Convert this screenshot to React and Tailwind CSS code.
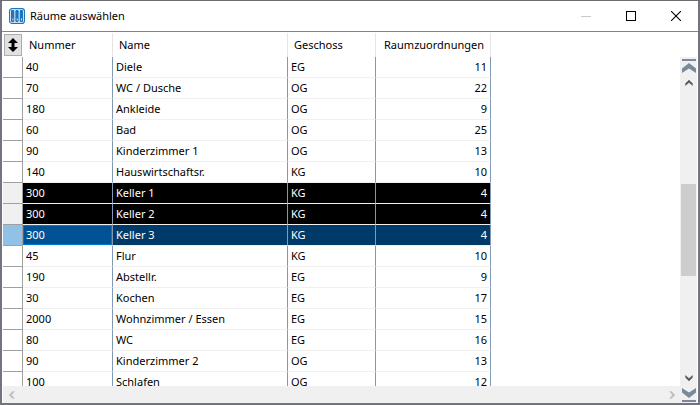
import { useState } from 'react';
import clsx from 'clsx';

const rooms = [
  { nummer: 40, name: 'Diele', geschoss: 'EG', anzahl: 11 },
  { nummer: 70, name: 'WC / Dusche', geschoss: 'OG', anzahl: 22 },
  { nummer: 180, name: 'Ankleide', geschoss: 'OG', anzahl: 9 },
  { nummer: 60, name: 'Bad', geschoss: 'OG', anzahl: 25 },
  { nummer: 90, name: 'Kinderzimmer 1', geschoss: 'OG', anzahl: 13 },
  { nummer: 140, name: 'Hauswirtschaftsr.', geschoss: 'KG', anzahl: 10 },
  { nummer: 300, name: 'Keller 1', geschoss: 'KG', anzahl: 4 },
  { nummer: 300, name: 'Keller 2', geschoss: 'KG', anzahl: 4 },
  { nummer: 300, name: 'Keller 3', geschoss: 'KG', anzahl: 4 },
  { nummer: 45, name: 'Flur', geschoss: 'KG', anzahl: 10 },
  { nummer: 190, name: 'Abstellr.', geschoss: 'EG', anzahl: 9 },
  { nummer: 30, name: 'Kochen', geschoss: 'EG', anzahl: 17 },
  { nummer: 2000, name: 'Wohnzimmer / Essen', geschoss: 'EG', anzahl: 15 },
  { nummer: 80, name: 'WC', geschoss: 'EG', anzahl: 16 },
  { nummer: 90, name: 'Kinderzimmer 2', geschoss: 'OG', anzahl: 13 },
  { nummer: 100, name: 'Schlafen', geschoss: 'OG', anzahl: 12 },
];

function AppIcon() {
  return (
    <svg width="16" height="16" viewBox="0 0 16 16" aria-hidden="true">
      <rect x="0.6" y="0.6" width="14.8" height="14.8" rx="2.5" fill="#fff" stroke="#1c74bc" strokeWidth="1.2" />
      {[2, 6.3, 10.6].map(x => (
        <g key={x}>
          <rect x={x} y="2" width="3.4" height="12" rx="1" fill="#1c74bc" />
          <path d={`M${x + 1.9} 10.5v2`} stroke="#fff" strokeWidth="0.8" />
        </g>
      ))}
    </svg>
  );
}

function SortIcon() {
  return (
    <svg width="10" height="14" viewBox="0 0 10 14" aria-hidden="true">
      <path d="M5 0L10 5H6.5V9H10L5 14L0 9H3.5V5H0Z" fill="#000" />
    </svg>
  );
}

function Chevron({ className }) {
  return (
    <svg width="8" height="6" viewBox="0 0 8 6" className={className} aria-hidden="true">
      <path d="M0.5 5.5V3.5L4 0L7.5 3.5V5.5L4 2.5Z" fill="currentColor" stroke="currentColor" strokeWidth="0.4" />
    </svg>
  );
}

function EndArrow({ className }) {
  return (
    <svg width="14" height="14" viewBox="0 0 14 14" className={className} aria-hidden="true">
      <path d="M0 0H14V2H0Z" fill="#7b8a9b" />
      <path d="M0 9.5L7 4L14 9.5V14L7 9.5L0 14Z" fill="#7b8a9b" />
    </svg>
  );
}

function TitleBar() {
  return (
    <header className="flex h-[31px] shrink-0 items-center justify-between border-b border-[#838395] bg-white pl-[7px]">
      <h1 className="flex items-center gap-[5px]">
        <AppIcon />
        Räume auswählen
      </h1>
      <div className="flex self-stretch">
        <button type="button" aria-label="Minimieren" disabled className="flex w-[45px] items-center justify-center">
          <svg width="10" height="10" viewBox="0 0 10 10" aria-hidden="true">
            <path d="M0 5.5H10" stroke="#c8c8c8" />
          </svg>
        </button>
        <button type="button" aria-label="Maximieren" className="flex w-[45px] items-center justify-center">
          <svg width="10" height="10" viewBox="0 0 10 10" aria-hidden="true">
            <rect x="0.5" y="0.5" width="9" height="9" fill="none" stroke="#000" />
          </svg>
        </button>
        <button type="button" aria-label="Schließen" className="flex w-[45px] items-center justify-center">
          <svg width="10" height="10" viewBox="0 0 10 10" aria-hidden="true">
            <path d="M0 0L10 10M10 0L0 10" stroke="#000" strokeWidth="1.1" />
          </svg>
        </button>
      </div>
    </header>
  );
}

function RoomTable() {
  const [selected, setSelected] = useState([6, 7, 8]);
  const [current, setCurrent] = useState(8);

  function toggleRow(index) {
    setSelected(selected.includes(index) ? selected.filter(i => i !== index) : [...selected, index]);
    setCurrent(index);
  }

  return (
    <table className="w-[488px] table-fixed border-separate border-spacing-0">
      <colgroup>
        <col className="w-5" />
        <col className="w-[90px]" />
        <col className="w-[175px]" />
        <col className="w-[88px]" />
        <col className="w-[115px]" />
      </colgroup>
      <thead>
        <tr className="h-6 text-left">
          <th className="p-0 pl-px">
            <button
              type="button"
              aria-label="Sortieren"
              className="flex h-[22px] w-[18px] items-center justify-center border border-[#adadad] bg-[#e1e1e1]"
            >
              <SortIcon />
            </button>
          </th>
          <th className="border-r border-[#e5e5e5] p-0 pl-1.5 font-normal">Nummer</th>
          <th className="border-r border-[#e5e5e5] p-0 pl-1.5 font-normal">Name</th>
          <th className="border-r border-[#e5e5e5] p-0 pl-1.5 font-normal">Geschoss</th>
          <th className="border-r border-[#e5e5e5] p-0 pr-1.5 text-right font-normal">Raumzuordnungen</th>
        </tr>
      </thead>
      <tbody>
        {rooms.map((room, index) => {
          const isSelected = selected.includes(index);
          const isCurrent = current === index;
          const cell = 'border-r border-b border-r-[#8099b5] border-b-[#f0f0f0] p-0';
          return (
            <tr
              key={index}
              className={clsx(
                'h-[21px]',
                isSelected && 'text-white',
                isSelected && (isCurrent ? 'bg-[#003a69]' : 'bg-black'),
              )}
            >
              <td className="border-r border-b border-[#a0a0a0] p-0">
                <button
                  type="button"
                  aria-label={`${room.name} auswählen`}
                  aria-pressed={isSelected}
                  onClick={() => toggleRow(index)}
                  className={clsx(
                    'block h-5 w-full',
                    !isSelected && 'bg-white',
                    isSelected && (isCurrent ? 'bg-[#91c1e7]' : 'bg-[#f0f0f0]'),
                  )}
                />
              </td>
              <td
                className={clsx(
                  cell,
                  'pl-[3px]',
                  isSelected && isCurrent && 'bg-[#005295] inset-ring inset-ring-[#0078d7]',
                )}
              >
                {room.nummer}
              </td>
              <td className={clsx(cell, 'pl-[3px]')}>{room.name}</td>
              <td className={clsx(cell, 'pl-[3px]')}>{room.geschoss}</td>
              <td className={clsx(cell, 'pr-[3px] text-right')}>{room.anzahl}</td>
            </tr>
          );
        })}
      </tbody>
    </table>
  );
}

function VerticalScrollbar() {
  return (
    <div className="mt-[25px] flex w-[17px] shrink-0 flex-col bg-[#f0f0f0]">
      <button type="button" aria-label="Zum Anfang" className="flex h-[17px] items-center justify-center">
        <EndArrow />
      </button>
      <button type="button" aria-label="Nach oben" className="flex h-[17px] items-center justify-center">
        <Chevron className="text-[#555]" />
      </button>
      <div className="flex flex-1 flex-col px-px">
        <div className="flex-1" />
        <div className="flex-1 bg-[#cdcdcd]" />
        <div className="flex-1" />
      </div>
      <button type="button" aria-label="Nach unten" className="flex h-[17px] items-center justify-center">
        <Chevron className="rotate-180 text-[#555]" />
      </button>
      <button type="button" aria-label="Zum Ende" className="flex h-[17px] items-center justify-center">
        <EndArrow className="rotate-180" />
      </button>
    </div>
  );
}

function HorizontalScrollbar() {
  return (
    <div className="flex h-[17px] shrink-0 items-center justify-between bg-[#f0f0f0]">
      <button type="button" aria-label="Nach links" disabled className="flex size-[17px] items-center justify-center">
        <Chevron className="-rotate-90 text-[#bfbfbf]" />
      </button>
      <button type="button" aria-label="Nach rechts" disabled className="flex size-[17px] items-center justify-center">
        <Chevron className="rotate-90 text-[#bfbfbf]" />
      </button>
    </div>
  );
}

export default function App() {
  return (
    <div className="flex h-screen flex-col border-t border-[#6d6d6d] bg-white font-['Noto_Sans','Open_Sans',sans-serif] text-[11px]/4 text-black">
      <div className="flex min-h-0 flex-1 flex-col border-x-2 border-b-2 border-[#747480]">
        <TitleBar />
        <main className="flex min-h-0 flex-1 px-px">
          <div className="flex min-w-0 flex-1 flex-col">
            <div className="min-h-0 flex-1 overflow-hidden pt-px">
              <RoomTable />
            </div>
            <HorizontalScrollbar />
          </div>
          <VerticalScrollbar />
        </main>
      </div>
    </div>
  );
}
